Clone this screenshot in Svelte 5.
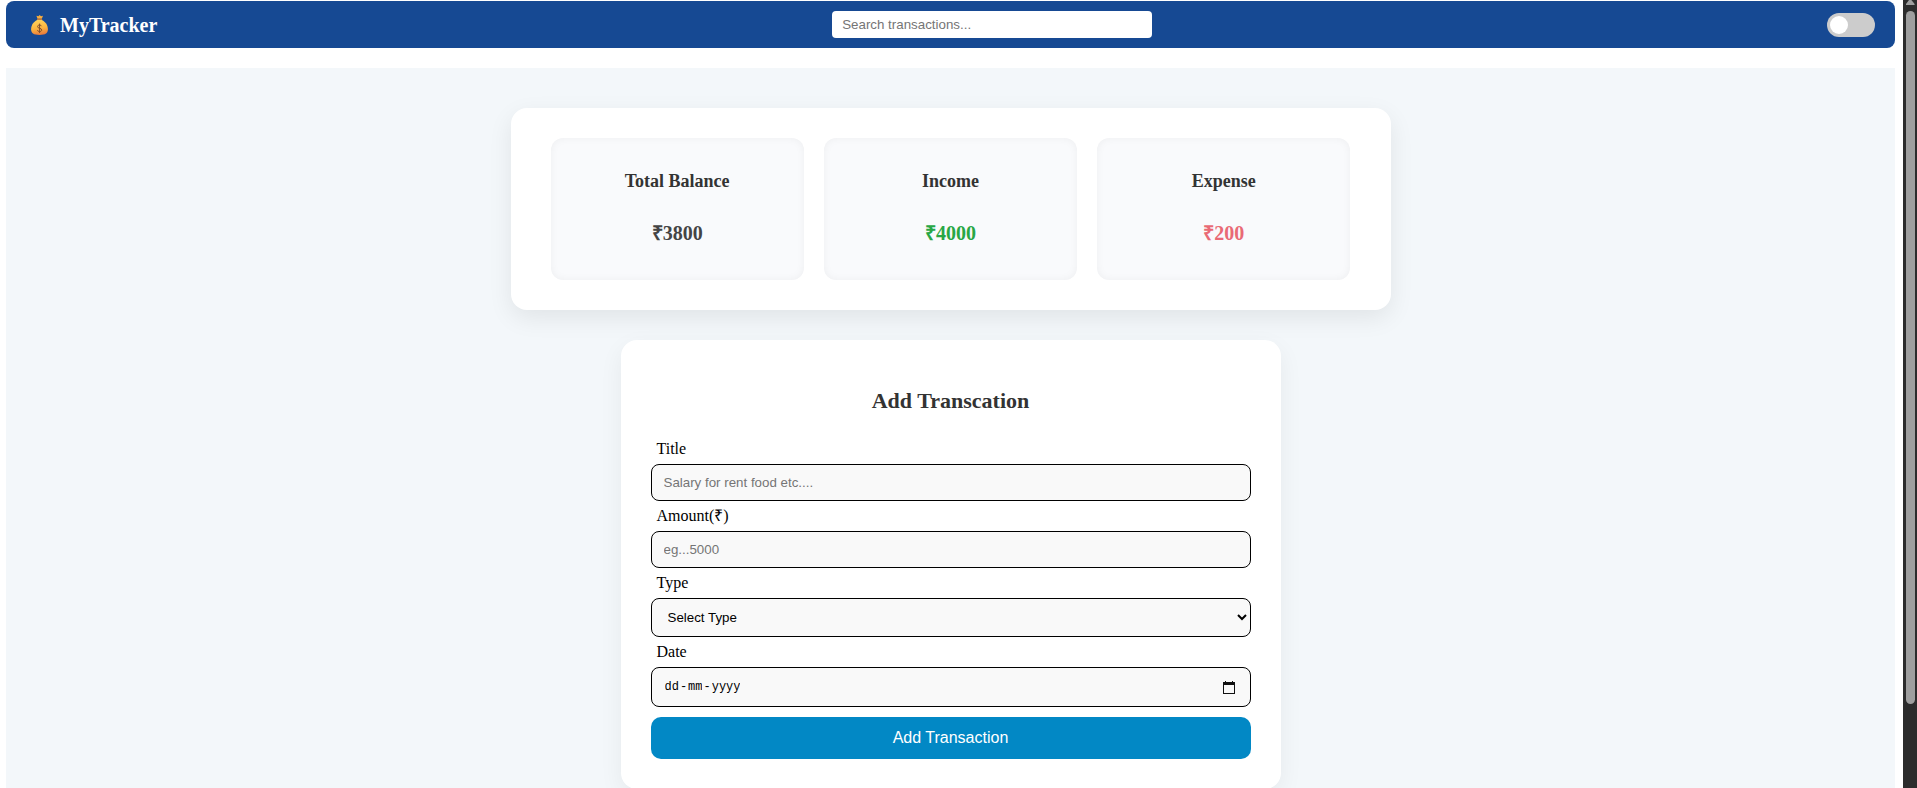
<script lang="ts">
  let search = $state('');
  let dark = $state(false);
  let title = $state('');
  let amount = $state('');
  let kind = $state('');
  let day = $state('');
  let month = $state('');
  let year = $state('');

  const totals = [
    { label: 'Total Balance', value: 3800, tone: 'balance' },
    { label: 'Income', value: 4000, tone: 'income' },
    { label: 'Expense', value: 200, tone: 'expense' }
  ];
</script>

<div class="window">
  <div class="page">
    <header>
      <div class="brand">
        <svg class="bag" viewBox="0 0 17 20" aria-hidden="true">
          <defs>
            <linearGradient id="bag-fill" x1="0.4" y1="0" x2="0.6" y2="1">
              <stop offset="0" stop-color="#ffd25a" />
              <stop offset="0.55" stop-color="#fbb540" />
              <stop offset="1" stop-color="#e8763c" />
            </linearGradient>
          </defs>
          <path d="M5.4 0.8 7.4 1.2 8.7 0.1 10 1.2 12 0.8 10.8 3.8H6.6Z" fill="#f9ae3e" />
          <path d="M6.4 5C2.8 6.4 .1 10 .1 14.2.1 18 2.4 19.9 8.5 19.9s8.4-1.9 8.4-5.7c0-4.2-2.7-7.8-6.3-9.2Z" fill="url(#bag-fill)" />
          <rect x="6" y="3.6" width="5.2" height="1.5" rx="0.7" fill="#c47c3c" />
          <path d="M10.5 11.2C10.2 10.4 9.5 10 8.6 10 7.4 10 6.6 10.6 6.6 11.6c0 2.3 4.1 1.1 4.1 3.4 0 1-.9 1.6-2.1 1.6-1.1 0-1.9-.5-2.2-1.4M8.6 8.6v9.4" fill="none" stroke="#80502e" stroke-width="1" />
        </svg>
        <span>MyTracker</span>
      </div>
      <input class="search" type="text" placeholder="Search transactions..." aria-label="Search transactions" bind:value={search} />
      <input class="switch" type="checkbox" role="switch" aria-label="Dark mode" bind:checked={dark} />
    </header>

    <main>
      <section class="summary">
        {#each totals as t}
          <article>
            <h3>{t.label}</h3>
            <p class={t.tone}>₹{t.value}</p>
          </article>
        {/each}
      </section>

      <form onsubmit={(e) => e.preventDefault()}>
        <h2>Add Transcation</h2>

        <label for="title">Title</label>
        <input id="title" class="field" type="text" placeholder="Salary for rent food etc...." bind:value={title} />

        <label for="amount">Amount(₹)</label>
        <input id="amount" class="field" type="text" inputmode="numeric" placeholder="eg...5000" bind:value={amount} />

        <label for="kind">Type</label>
        <select id="kind" class="field" bind:value={kind}>
          <option value="">Select Type</option>
          <option value="income">Income</option>
          <option value="expense">Expense</option>
        </select>

        <label for="day">Date</label>
        <div class="field date">
          <input id="day" type="text" placeholder="dd" maxlength="2" bind:value={day} />
          <span>-</span>
          <input type="text" placeholder="mm" maxlength="2" aria-label="Month" bind:value={month} />
          <span>-</span>
          <input class="year" type="text" placeholder="yyyy" maxlength="4" aria-label="Year" bind:value={year} />
          <button class="picker" type="button" aria-label="Open calendar">
            <svg viewBox="0 0 12 13" aria-hidden="true">
              <path d="M2 0h1v1h6V0h1v1h2v12H0V1h2ZM1 4v8h10V4Z" fill="#111" fill-rule="evenodd" />
            </svg>
          </button>
        </div>

        <button class="submit" type="submit">Add Transaction</button>
      </form>
    </main>
  </div>

  <div class="scrollbar" aria-hidden="true">
    <svg viewBox="0 0 14 11">
      <path d="M3 5V4L6 0h2.4L11.6 4v1Z" fill="#9f9f9f" />
    </svg>
    <div class="thumb"></div>
  </div>
</div>

<style>
  :global(body) {
    background: #fff;
    overflow: hidden;
  }

  .window {
    display: grid;
    grid-template-columns: minmax(0, 1fr) 14px;
    height: 100vh;
    font-family: 'Liberation Serif', 'Times New Roman', serif;
    font-size: 16px;
    color: #000;
  }

  .page {
    display: flex;
    flex-direction: column;
    gap: 20px;
    padding: 1px 8px 0 6px;
    overflow: hidden;
  }

  header {
    display: flex;
    flex-shrink: 0;
    align-items: center;
    justify-content: space-between;
    padding: 10px 20px;
    border-radius: 8px;
    background: #164993;
  }

  .brand {
    display: flex;
    align-items: center;
    gap: 12px;
    padding-left: 5px;
    color: #fff;
    font-size: 20px;
    font-weight: bold;
    line-height: 24px;
  }

  .bag {
    width: 17px;
    height: 20px;
  }

  input,
  select,
  button {
    box-sizing: border-box;
    font-family: 'Liberation Sans', Arial, sans-serif;
  }

  .search {
    width: 320px;
    height: 27px;
    padding: 0 10px;
    border: none;
    border-radius: 4px;
    background: #fff;
  }

  .switch {
    appearance: none;
    display: flex;
    align-items: center;
    width: 48px;
    height: 24px;
    margin: 0;
    padding: 3px;
    border-radius: 12px;
    background: #ccc;
  }

  .switch::before {
    content: '';
    width: 18px;
    height: 18px;
    border-radius: 50%;
    background: #fff;
  }

  .switch:checked {
    justify-content: flex-end;
  }

  main {
    display: flex;
    flex: 1 0 auto;
    flex-direction: column;
    align-items: center;
    gap: 30px;
    padding: 40px 20px;
    background: #f3f7fa;
  }

  .summary {
    box-sizing: border-box;
    display: grid;
    grid-template-columns: repeat(3, 1fr);
    gap: 20px;
    width: 100%;
    max-width: 880px;
    padding: 30px 40px;
    border-radius: 16px;
    background: #fff;
    box-shadow: 0 8px 24px rgba(0, 0, 0, 0.08);
  }

  article {
    padding: 32px 20px 35px;
    border-radius: 12px;
    background: #f9fafc;
    box-shadow: inset 0 0 8px rgba(0, 0, 0, 0.05);
    text-align: center;
  }

  h3 {
    margin: 0 0 29px;
    color: #333;
    font-size: 18px;
    line-height: 22px;
  }

  p {
    margin: 0;
    font-size: 20px;
    font-weight: bold;
    line-height: 24px;
  }

  .balance {
    color: #444;
  }

  .income {
    color: #28a745;
  }

  .expense {
    color: #e96a75;
  }

  form {
    box-sizing: border-box;
    display: flex;
    flex-direction: column;
    width: 100%;
    max-width: 660px;
    padding: 30px;
    border-radius: 16px;
    background: #fff;
    box-shadow: 0 8px 24px rgba(0, 0, 0, 0.06);
  }

  h2 {
    margin: 18px 0 20px;
    color: #333;
    font-size: 22px;
    line-height: 26px;
    text-align: center;
  }

  label {
    margin: 6px;
    line-height: 18px;
  }

  .field {
    box-sizing: border-box;
    width: 100%;
    height: 37px;
    padding: 0 12px;
    border: 1px solid #000;
    border-radius: 8px;
    background: #f9f9f9;
  }

  select.field {
    height: 39px;
    padding-right: 0;
    color: #000;
  }

  .date {
    display: flex;
    align-items: center;
    gap: 1px;
    height: 40px;
    padding: 0 15px 0 13px;
    font-family: 'Liberation Mono', monospace;
    font-size: 12px;
  }

  .date input {
    width: 2ch;
    padding: 0;
    border: none;
    background: none;
    font: inherit;
  }

  .date .year {
    width: 4ch;
  }

  .date input::placeholder {
    color: #000;
  }

  .picker {
    display: flex;
    margin-left: auto;
    padding: 0;
    border: none;
    background: none;
  }

  .picker svg {
    width: 12px;
    height: 13px;
  }

  .submit {
    height: 42px;
    margin-top: 10px;
    border: none;
    border-radius: 10px;
    background: #0288c5;
    color: #fff;
    font-size: 16px;
  }

  .scrollbar {
    display: flex;
    flex-direction: column;
    align-items: center;
    background: #2c2c2c;
  }

  .scrollbar svg {
    width: 14px;
    height: 11px;
  }

  .thumb {
    width: 9px;
    height: 88%;
    border-radius: 5px;
    background: #9f9f9f;
  }
</style>
